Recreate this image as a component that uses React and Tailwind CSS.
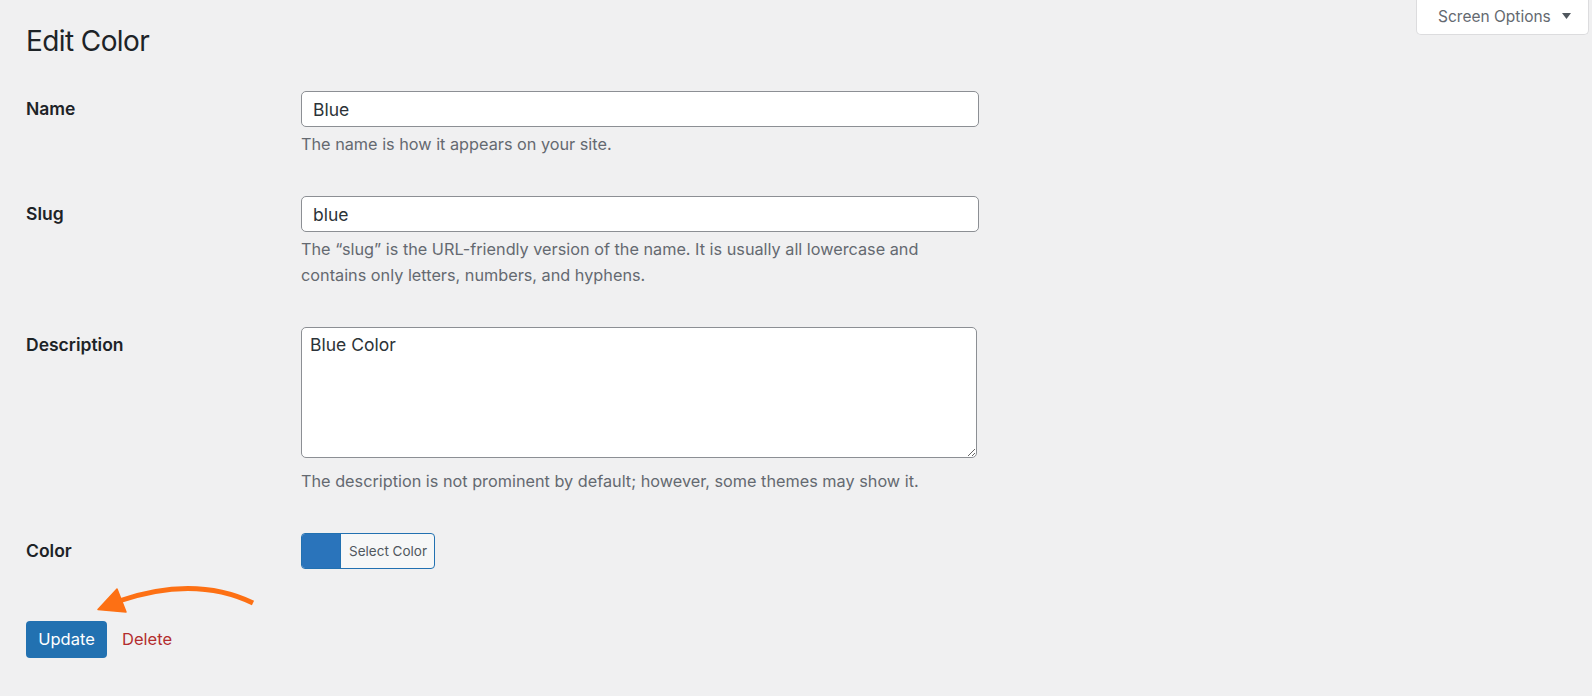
import { useState } from 'react';

const font = { fontFamily: 'Inter, "Liberation Sans", sans-serif' };

function Field({ label, children, help, helpGap = 'mt-[4px]' }) {
  return (
    <div className="flex items-start">
      <div className="w-[275px] shrink-0 text-[17.5px] font-semibold leading-[36px] text-[#1d2327]">{label}</div>
      <div className="flex flex-col">
        {children}
        {help && <p className={`${helpGap} text-[16.25px] leading-[26px] text-[#646970]`}>{help}</p>}
      </div>
    </div>
  );
}

export default function App() {
  const [name, setName] = useState('Blue');
  const [slug, setSlug] = useState('blue');
  const [desc, setDesc] = useState('Blue Color');

  return (
    <div className="relative min-h-[696px] bg-[#f0f0f1] pl-[26px] text-[#1d2327]" style={font}>
      <div className="flex items-start justify-between">
        <h1 className="mt-[23px] text-[28px] font-normal leading-[37px] tracking-[-0.6px] text-[#1d2327]">Edit Color</h1>
        <button className="mr-[3px] flex h-[35px] w-[173px] items-center rounded-b-[5px] border border-t-0 border-[#dcdcde] bg-white pl-[21px] text-[15.5px] text-[#646970]">
          Screen Options
          <svg width="9" height="6" viewBox="0 0 9 6" className="ml-[11px] mb-[2px]">
            <path d="M0 0 H9 L4.5 6 Z" fill="#50575e" />
          </svg>
        </button>
      </div>

      <div className="mt-[31px]">
        <Field label="Name" help="The name is how it appears on your site.">
          <input
            value={name}
            onChange={(e) => setName(e.target.value)}
            className="h-[36px] w-[678px] rounded-[5px] border border-[#8c8f94] bg-white px-[11px] text-[17.5px] text-[#2c3338] outline-none"
          />
        </Field>
      </div>

      <div className="mt-[39px]">
        <Field
          label="Slug"
          help={
            <>
              The “slug” is the URL-friendly version of the name. It is usually all lowercase and
              <br />
              contains only letters, numbers, and hyphens.
            </>
          }
        >
          <input
            value={slug}
            onChange={(e) => setSlug(e.target.value)}
            className="h-[36px] w-[678px] rounded-[5px] border border-[#8c8f94] bg-white px-[11px] text-[17.5px] text-[#2c3338] outline-none"
          />
        </Field>
      </div>

      <div className="mt-[39px]">
        <Field
          label="Description"
          helpGap="mt-[10px]"
          help="The description is not prominent by default; however, some themes may show it."
        >
          <textarea
            value={desc}
            onChange={(e) => setDesc(e.target.value)}
            className="block h-[131px] w-[676px] rounded-[5px] border border-[#8c8f94] bg-white px-[8px] py-[4px] text-[17.5px] leading-[26px] text-[#2c3338] outline-none"
          />
        </Field>
      </div>

      <div className="mt-[39px]">
        <Field label="Color">
          <button className="flex h-[36px] w-[134px] overflow-hidden rounded-[4px] border border-[#2271b1] bg-[#f6f7f7]">
            <span className="h-full w-[38px] bg-[#2a74bb]" />
            <span className="flex h-full flex-1 items-center border-l border-[#2271b1] pl-[8px] text-[13.5px] text-[#50575e]">
              Select Color
            </span>
          </button>
        </Field>
      </div>

      <div className="mt-[52px] flex items-center">
        <button className="h-[37px] w-[81px] rounded-[4px] bg-[#2271b1] text-[16.5px] text-white">Update</button>
        <a href="#" className="ml-[15px] text-[16.5px] text-[#b32d2e]">Delete</a>
      </div>

      <svg className="pointer-events-none absolute left-0 top-0" width="300" height="696" viewBox="0 0 300 696">
        <path d="M253 603 Q 195 575 119 601" fill="none" stroke="#fd7014" strokeWidth="5" />
        <path d="M98 609.5 L117 589 L126 612 Z" fill="#fd7014" stroke="#fd7014" strokeWidth="1.5" strokeLinejoin="round" />
      </svg>
    </div>
  );
}
